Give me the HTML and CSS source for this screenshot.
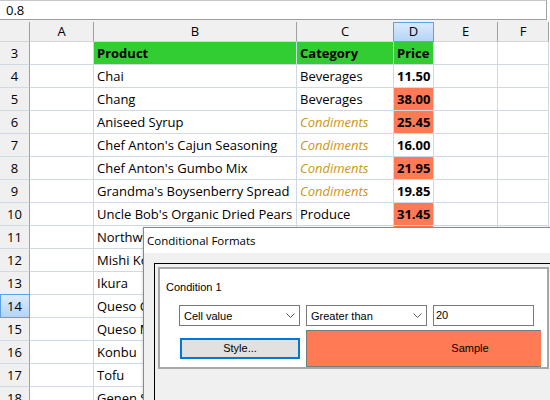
FILE: index.html
```html
<!DOCTYPE html>
<html>
<head>
<meta charset="utf-8">
<link rel="stylesheet" href="styles.css">
</head>
<body>
<div class="formula">0.8</div>
<div class="sheet">
  <div class="strip"></div>
  <div class="hd corner"></div><div class="hd">A</div><div class="hd">B</div><div class="hd pre-sel">C</div><div class="hd sel">D</div><div class="hd">E</div><div class="hd">F</div>

  <div class="rh">3</div><div class="c"></div><div class="c g b">Product</div><div class="c g b">Category</div><div class="c g b">Price</div><div class="c"></div><div class="c"></div>
  <div class="rh">4</div><div class="c"></div><div class="c">Chai</div><div class="c">Beverages</div><div class="c num">11.50</div><div class="c"></div><div class="c"></div>
  <div class="rh">5</div><div class="c"></div><div class="c">Chang</div><div class="c">Beverages</div><div class="c num hot">38.00</div><div class="c"></div><div class="c"></div>
  <div class="rh">6</div><div class="c"></div><div class="c">Aniseed Syrup</div><div class="c cond">Condiments</div><div class="c num hot">25.45</div><div class="c"></div><div class="c"></div>
  <div class="rh">7</div><div class="c"></div><div class="c">Chef Anton's Cajun Seasoning</div><div class="c cond">Condiments</div><div class="c num">16.00</div><div class="c"></div><div class="c"></div>
  <div class="rh">8</div><div class="c"></div><div class="c">Chef Anton's Gumbo Mix</div><div class="c cond">Condiments</div><div class="c num hot">21.95</div><div class="c"></div><div class="c"></div>
  <div class="rh">9</div><div class="c"></div><div class="c">Grandma's Boysenberry Spread</div><div class="c cond">Condiments</div><div class="c num">19.85</div><div class="c"></div><div class="c"></div>
  <div class="rh">10</div><div class="c"></div><div class="c">Uncle Bob's Organic Dried Pears</div><div class="c">Produce</div><div class="c num hot">31.45</div><div class="c"></div><div class="c"></div>
  <div class="rh">11</div><div class="c"></div><div class="c">Northwoods Cranberry Sauce</div><div class="c cond">Condiments</div><div class="c num hot">40.00</div><div class="c"></div><div class="c"></div>
  <div class="rh">12</div><div class="c"></div><div class="c">Mishi Kobe Niku</div><div class="c">Meat/Poultry</div><div class="c num hot">97.00</div><div class="c"></div><div class="c"></div>
  <div class="rh pre-sel-row">13</div><div class="c"></div><div class="c">Ikura</div><div class="c">Seafood</div><div class="c num hot">31.00</div><div class="c"></div><div class="c"></div>
  <div class="rh sel">14</div><div class="c"></div><div class="c">Queso Cabrales</div><div class="c">Dairy Products</div><div class="c num hot">21.00</div><div class="c"></div><div class="c"></div>
  <div class="rh">15</div><div class="c"></div><div class="c">Queso Manchego La Pastora</div><div class="c">Dairy Products</div><div class="c num hot">38.00</div><div class="c"></div><div class="c"></div>
  <div class="rh">16</div><div class="c"></div><div class="c">Konbu</div><div class="c">Seafood</div><div class="c num">6.00</div><div class="c"></div><div class="c"></div>
  <div class="rh">17</div><div class="c"></div><div class="c">Tofu</div><div class="c">Produce</div><div class="c num hot">23.25</div><div class="c"></div><div class="c"></div>
  <div class="rh">18</div><div class="c"></div><div class="c">Genen Shouyu</div><div class="c cond">Condiments</div><div class="c num">15.50</div><div class="c"></div><div class="c"></div>
</div>

<div class="dialog">
  <div class="title">Conditional Formats</div>
  <div class="dbody">
    <div class="panel">
      <div class="group">
        <div class="gtitle">Condition 1</div>
        <div class="row1">
          <div class="combo w1"><span>Cell value</span><svg width="9" height="5" viewBox="0 0 9 5"><polyline points="0.5,0.5 4.5,4.5 8.5,0.5" fill="none" stroke="#5a5a5a" stroke-width="1"/></svg></div>
          <div class="combo w1"><span>Greater than</span><svg width="9" height="5" viewBox="0 0 9 5"><polyline points="0.5,0.5 4.5,4.5 8.5,0.5" fill="none" stroke="#5a5a5a" stroke-width="1"/></svg></div>
          <div class="input">20</div>
        </div>
        <div class="row2">
          <div class="btn">Style...</div>
          <div class="sample">Sample</div>
        </div>
      </div>
    </div>
  </div>
</div>
</body>
</html>
```
FILE: styles.css
```css
* { box-sizing: border-box; margin: 0; padding: 0; }
html, body { width: 550px; height: 400px; overflow: hidden; background: #fff; }
body { font-family: "Open Sans", sans-serif; font-size: 13px; color: #000; position: relative; }

.formula {
  height: 20px; width: 547px;
  border-top: 1px solid #c8c8c8;
  border-bottom: 1px solid #a0a0a0;
  border-right: 1px solid #a0a0a0;
  padding-left: 6px; line-height: 19px;
}

.sheet {
  display: grid;
  grid-template-columns: 30px 64px 203px 97px 40px 64px 51px;
  grid-template-rows: 2px 20px;
  grid-auto-rows: 23px;
}
.strip { grid-column: 1 / -1; background: #f0f0f0; }

.hd {
  background: #f0f0f0;
  border-right: 1px solid #a0a0a0;
  border-bottom: 1px solid #d5d5d5;
  text-align: center; line-height: 19px;
}
.hd.pre-sel { border-right-color: #5f9fe6; }
.hd.sel {
  background: linear-gradient(#dcebfc, #b3d4f8);
  border-right-color: #5f9fe6;
  border-bottom-color: #5f9fe6;
  box-shadow: inset 0 1px 0 #5f9fe6;
}

.rh {
  background: #f0f0f0;
  border-right: 1px solid #a0a0a0;
  border-bottom: 1px solid #d0d7e5;
  text-align: center; line-height: 22px;
}
.rh.pre-sel-row { border-bottom-color: #5f9fe6; }
.rh.sel {
  background: linear-gradient(#dcebfc, #b3d4f8);
  border-right-color: #5f9fe6;
  border-bottom-color: #5f9fe6;
  box-shadow: inset 1px 0 0 #5f9fe6;
}

.c {
  border-right: 1px solid #d0d7e5;
  border-bottom: 1px solid #d0d7e5;
  padding: 0 3px; line-height: 22px;
  white-space: nowrap; overflow: hidden;
}
.g { background: #32cd32; }
.b { font-weight: bold; }
.num { text-align: right; font-weight: bold; }
.hot { background: #ff7a55; }
.cond { font-style: italic; color: #cc9612; }

.dialog {
  position: absolute; left: 143px; top: 227px;
  width: 420px; height: 190px;
  border: 1px solid #8a8a8a;
  background: #f0f0f0;
  box-shadow: -1px 0 2px rgba(0,0,0,0.12);
}
.title {
  height: 25px; background: #fff;
  padding-left: 3px; line-height: 25px; font-size: 11.5px;
}
.dbody { padding: 10px 0 0 10px; }
.panel {
  border-top: 1px solid #000; border-left: 1px solid #000;
  padding: 3px; height: 200px;
}
.group {
  width: 391px; height: 102px;
  border: 2px solid #a7a7a7;
  background: #fff;
  padding: 12px 6px 0 19px;
  font-family: "Liberation Sans", Arial, sans-serif; font-size: 11px;
}
.gtitle { line-height: 13px; margin-left: -13px; }
.row1 { display: flex; gap: 6px; margin-top: 11px; }
.combo {
  width: 121px; height: 21px;
  border: 1px solid #7a7a7a; background: #fff;
  display: flex; align-items: center; justify-content: space-between;
  padding: 0 4px 0 4px;
}
.combo svg { display: block; }
.input {
  width: 101px; height: 21px;
  border: 1px solid #7a7a7a; background: #fff;
  padding-left: 2px; line-height: 19px;
}
.row2 { display: flex; align-items: center; margin-top: 4px; height: 37px; overflow: hidden; }
.btn {
  flex-shrink: 0; width: 120px; height: 21px; margin-left: 1px; margin-right: 6px;
  border: 2px solid #0078d7; background: #e1e1e1;
  text-align: center; line-height: 17px;
}
.sample {
  flex-shrink: 0; width: 328px; height: 37px;
  border: 1px solid #7a7a7a; background: #ff7a55;
  text-align: center; line-height: 35px;
}
```
